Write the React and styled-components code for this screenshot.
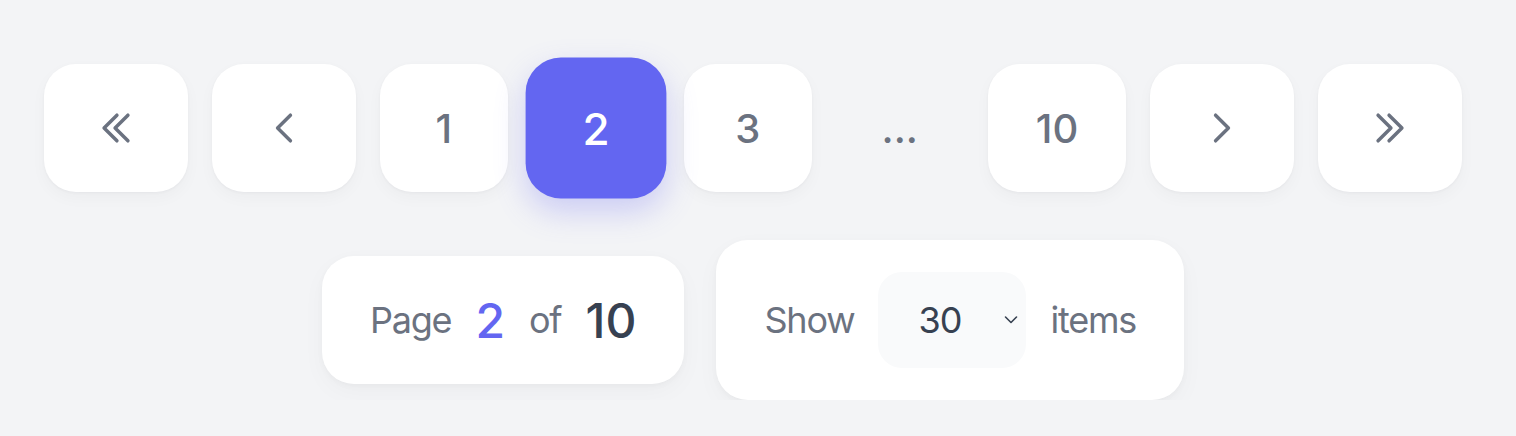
import React, { useState } from "react";
import styled, { createGlobalStyle } from "styled-components";

const Global = createGlobalStyle`
  html, body {
    margin: 0;
    padding: 0;
    background: #f3f4f6;
    font-family: Inter, "Noto Sans", "Liberation Sans", sans-serif;
  }
`;

const Page = styled.div`
  width: 1506px;
  padding-top: 64px;
  display: flex;
  flex-direction: column;
  align-items: center;
  gap: 48px;
`;

const Pager = styled.nav`
  display: flex;
  align-items: center;
  gap: 24px;
`;

const Btn = styled.button`
  box-sizing: border-box;
  min-width: ${(p) => (p.$icon ? "144px" : "128px")};
  height: 128px;
  padding: 0 48px;
  border: none;
  border-radius: 32px;
  display: flex;
  align-items: center;
  justify-content: center;
  font-family: inherit;
  font-size: 40px;
  font-weight: 500;
  color: ${(p) => (p.$active ? "#ffffff" : "#6b7280")};
  background: ${(p) => (p.$active ? "#6366f1" : "#ffffff")};
  box-shadow: ${(p) =>
    p.$active
      ? "0 12px 28px rgba(99, 102, 241, 0.28)"
      : "0 1px 3px rgba(17, 24, 39, 0.04), 0 6px 16px rgba(17, 24, 39, 0.03)"};
  transform: ${(p) => (p.$active ? "scale(1.1)" : "none")};
  cursor: pointer;

  svg {
    width: 44px;
    height: 44px;
    flex: none;
  }
`;

const Dots = styled.span`
  width: 128px;
  height: 128px;
  display: flex;
  align-items: center;
  justify-content: center;
  font-size: 40px;
  font-weight: 500;
  color: #6b7280;
`;

const Row = styled.div`
  display: flex;
  align-items: center;
  gap: 32px;
`;

const Card = styled.div`
  box-sizing: border-box;
  height: ${(p) => p.$h}px;
  padding: 0 48px;
  display: flex;
  align-items: center;
  gap: 24px;
  background: #ffffff;
  border-radius: 32px;
  box-shadow: 0 2px 6px rgba(17, 24, 39, 0.03), 0 8px 24px rgba(17, 24, 39, 0.03);
`;

const Label = styled.span`
  font-size: 36px;
  letter-spacing: -1.2px;
  color: #6b7280;
`;

const Num = styled.span`
  font-size: 48px;
  font-weight: 500;
  color: ${(p) => (p.$accent ? "#6366f1" : "#374151")};
`;

const SelectWrap = styled.div`
  position: relative;
  width: 148px;
  height: 96px;
  border-radius: 24px;
  background: #f9fafb;
`;

const Select = styled.select`
  appearance: none;
  width: 100%;
  height: 100%;
  border: none;
  outline: none;
  background: transparent;
  padding: 0 40px;
  font-family: inherit;
  font-size: 36px;
  letter-spacing: -1px;
  color: #374151;
  cursor: pointer;
`;

const Caret = styled.svg`
  position: absolute;
  right: 7px;
  top: 40px;
  width: 16px;
  height: 16px;
  pointer-events: none;
`;

const Icon = ({ d }) => (
  <svg viewBox="0 0 24 24" fill="none" stroke="currentColor" strokeWidth="1.9" strokeLinecap="round" strokeLinejoin="round">
    <path d={d} />
  </svg>
);

const FIRST = "M18.5 5 11.5 12l7 7M12.5 5 5.5 12l7 7";
const PREV = "M15.5 19 8.5 12l7-7";
const NEXT = "m8.5 5 7 7-7 7";
const LAST = "m5.5 5 7 7-7 7m6-14 7 7-7 7";

export default function App() {
  const [page, setPage] = useState(2);
  const [size, setSize] = useState("30");
  const total = 10;
  const items = [1, 2, 3, "gap", 10];

  return (
    <Page>
      <Global />
      <Pager>
        <Btn $icon aria-label="First page" onClick={() => setPage(1)}>
          <Icon d={FIRST} />
        </Btn>
        <Btn $icon aria-label="Previous page" onClick={() => setPage(Math.max(1, page - 1))}>
          <Icon d={PREV} />
        </Btn>
        {items.map((n) =>
          n === "gap" ? (
            <Dots key={n}>...</Dots>
          ) : (
            <Btn key={n} $active={n === page} onClick={() => setPage(n)}>
              {n}
            </Btn>
          )
        )}
        <Btn $icon aria-label="Next page" onClick={() => setPage(Math.min(total, page + 1))}>
          <Icon d={NEXT} />
        </Btn>
        <Btn $icon aria-label="Last page" onClick={() => setPage(total)}>
          <Icon d={LAST} />
        </Btn>
      </Pager>

      <Row>
        <Card $h={128}>
          <Label>Page</Label>
          <Num $accent>{page}</Num>
          <Label>of</Label>
          <Num>{total}</Num>
        </Card>
        <Card $h={160}>
          <Label>Show</Label>
          <SelectWrap>
            <Select value={size} onChange={(e) => setSize(e.target.value)}>
              <option value="10">10</option>
              <option value="20">20</option>
              <option value="30">30</option>
              <option value="50">50</option>
            </Select>
            <Caret viewBox="0 0 16 16" fill="none" stroke="#374151" strokeWidth="1.6" strokeLinecap="round" strokeLinejoin="round">
              <path d="M2.5 5 8 10.5 13.5 5" />
            </Caret>
          </SelectWrap>
          <Label>items</Label>
        </Card>
      </Row>
    </Page>
  );
}
